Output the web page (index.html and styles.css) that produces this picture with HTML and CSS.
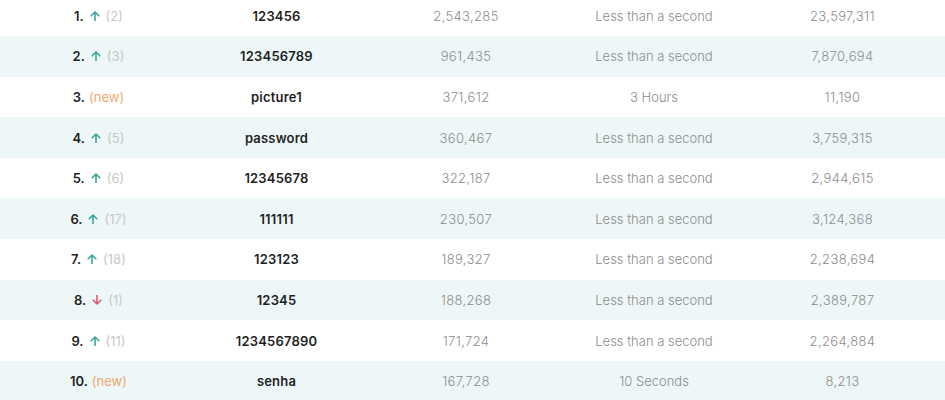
FILE: index.html
```html
<!DOCTYPE html>
<html>
<head>
<meta charset="utf-8">
<link rel="stylesheet" href="styles.css">
</head>
<body>
<div class="table">
  <div class="row">
    <div class="cell rank"><b>1.</b><svg class="arrow up" viewBox="0 0 10 10"><path d="M5 9.5V1M1.2 4.8L5 1l3.8 3.8"/></svg><span class="prev">(2)</span></div>
    <div class="cell pw">123456</div><div class="cell num">2,543,285</div><div class="cell time">Less than a second</div><div class="cell num last">23,597,311</div>
  </div>
  <div class="row alt">
    <div class="cell rank"><b>2.</b><svg class="arrow up" viewBox="0 0 10 10"><path d="M5 9.5V1M1.2 4.8L5 1l3.8 3.8"/></svg><span class="prev">(3)</span></div>
    <div class="cell pw">123456789</div><div class="cell num">961,435</div><div class="cell time">Less than a second</div><div class="cell num last">7,870,694</div>
  </div>
  <div class="row">
    <div class="cell rank"><b>3.</b><span class="new">(new)</span></div>
    <div class="cell pw">picture1</div><div class="cell num">371,612</div><div class="cell time">3 Hours</div><div class="cell num last">11,190</div>
  </div>
  <div class="row alt">
    <div class="cell rank"><b>4.</b><svg class="arrow up" viewBox="0 0 10 10"><path d="M5 9.5V1M1.2 4.8L5 1l3.8 3.8"/></svg><span class="prev">(5)</span></div>
    <div class="cell pw">password</div><div class="cell num">360,467</div><div class="cell time">Less than a second</div><div class="cell num last">3,759,315</div>
  </div>
  <div class="row">
    <div class="cell rank"><b>5.</b><svg class="arrow up" viewBox="0 0 10 10"><path d="M5 9.5V1M1.2 4.8L5 1l3.8 3.8"/></svg><span class="prev">(6)</span></div>
    <div class="cell pw">12345678</div><div class="cell num">322,187</div><div class="cell time">Less than a second</div><div class="cell num last">2,944,615</div>
  </div>
  <div class="row alt">
    <div class="cell rank"><b>6.</b><svg class="arrow up" viewBox="0 0 10 10"><path d="M5 9.5V1M1.2 4.8L5 1l3.8 3.8"/></svg><span class="prev">(17)</span></div>
    <div class="cell pw">111111</div><div class="cell num">230,507</div><div class="cell time">Less than a second</div><div class="cell num last">3,124,368</div>
  </div>
  <div class="row">
    <div class="cell rank"><b>7.</b><svg class="arrow up" viewBox="0 0 10 10"><path d="M5 9.5V1M1.2 4.8L5 1l3.8 3.8"/></svg><span class="prev">(18)</span></div>
    <div class="cell pw">123123</div><div class="cell num">189,327</div><div class="cell time">Less than a second</div><div class="cell num last">2,238,694</div>
  </div>
  <div class="row alt">
    <div class="cell rank"><b>8.</b><svg class="arrow down" viewBox="0 0 10 10"><path d="M5 0.5V9M1.2 5.2L5 9l3.8-3.8"/></svg><span class="prev">(1)</span></div>
    <div class="cell pw">12345</div><div class="cell num">188,268</div><div class="cell time">Less than a second</div><div class="cell num last">2,389,787</div>
  </div>
  <div class="row">
    <div class="cell rank"><b>9.</b><svg class="arrow up" viewBox="0 0 10 10"><path d="M5 9.5V1M1.2 4.8L5 1l3.8 3.8"/></svg><span class="prev">(11)</span></div>
    <div class="cell pw">1234567890</div><div class="cell num">171,724</div><div class="cell time">Less than a second</div><div class="cell num last">2,264,884</div>
  </div>
  <div class="row alt">
    <div class="cell rank"><b>10.</b><span class="new">(new)</span></div>
    <div class="cell pw">senha</div><div class="cell num">167,728</div><div class="cell time">10 Seconds</div><div class="cell num last">8,213</div>
  </div>
</div>
</body>
</html>
```
FILE: styles.css
```css
html, body {
  margin: 0;
  padding: 0;
  background: #ffffff;
  overflow: hidden;
}
body {
  font-family: Inter, "Noto Sans", sans-serif;
  font-size: 13px;
  color: #8a8a8a;
}
.table {
  margin-top: -4.8px;
  width: 945px;
}
.row {
  display: grid;
  grid-template-columns: 197px 159px 220px 156px 213px;
  height: 40.67px;
  align-items: center;
}
.row.alt {
  background: #eef7f7;
}
.cell {
  text-align: center;
  white-space: nowrap;
}
.rank {
  display: flex;
  justify-content: center;
  align-items: center;
  gap: 6px;
  color: #c8c8c8;
}
.rank b {
  color: #1f1f1f;
  font-weight: 600;
}
.rank .new {
  margin-left: -2px;
}
.arrow {
  width: 10px;
  height: 10px;
  fill: none;
  stroke-width: 1.6;
  stroke-linecap: round;
  stroke-linejoin: round;
}
.arrow.up { stroke: #3aa59b; }
.arrow.down { stroke: #e0566b; }
.new {
  color: #f1a872;
}
.pw {
  color: #1f1f1f;
  font-weight: 600;
  letter-spacing: 0.2px;
}
.num, .time {
  font-weight: 300;
  color: #8c8c8c;
}
.num {
  letter-spacing: 0.35px;
}
.last {
  padding-left: 8px;
}
```
